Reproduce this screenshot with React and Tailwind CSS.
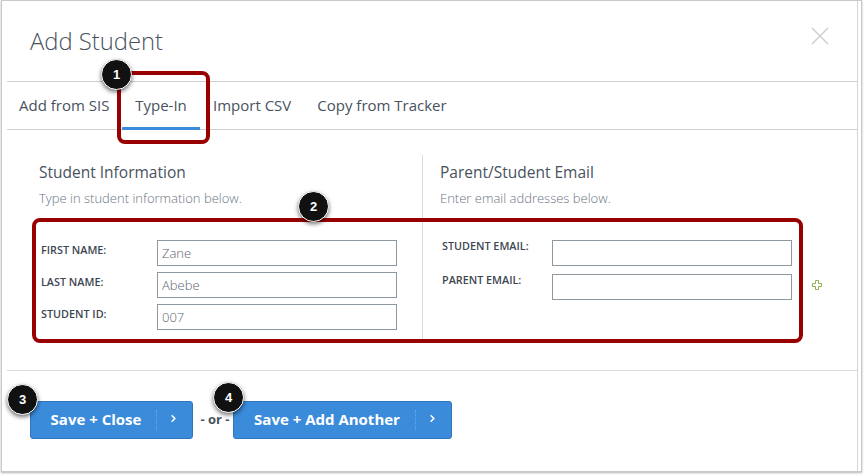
import { ChevronRight } from "lucide-react";

const font = "font-['Open_Sans',sans-serif]";

function Field({ label, value, labelClass = "w-[116px]" }) {
  return (
    <div className="flex items-start">
      <label className={`shrink-0 text-[10.8px] leading-[14px] font-semibold text-[#3d4652] ${labelClass}`}>
        {label}
      </label>
      <div className="w-[240px] h-[26px] border border-[#8f98a1] px-1 text-[13px] leading-[25px] font-light text-[#5a6470]">
        {value}
      </div>
    </div>
  );
}

function SaveButton({ label, className }) {
  return (
    <button className={`flex items-center h-[38px] rounded-[3px] bg-[#3b8bdb] border border-[#2f76bd] text-white ${className}`}>
      <span className="flex-1 text-center text-[15px] font-bold pl-[5px] pb-[1px]">{label}</span>
      <span className="flex items-center justify-center w-[36px] h-[20px] border-l border-dotted border-[#6ea9e4] pr-[2px]">
        <ChevronRight size={11} strokeWidth={3.5} className="-mt-[4px]" />
      </span>
    </button>
  );
}

function Step({ n, className }) {
  return (
    <div className={`absolute w-[31px] h-[31px] rounded-full bg-[#111] border border-white flex items-center justify-center text-white text-[13px] font-bold font-['Liberation_Sans',sans-serif] shadow-[0_2px_4px_rgba(0,0,0,0.55)] ${className}`}>
      {n}
    </div>
  );
}

export default function App() {
  return (
    <div className={`relative w-[864px] h-[475px] overflow-hidden bg-white ${font}`}>
      {/* Modal */}
      <div className="w-[861px] h-[472px] ml-px border border-[#c9c9c9] bg-white pl-[5px] pr-[3px] shadow-[0_1px_2px_rgba(0,0,0,0.3)]">
        <div className="h-full border-r border-[#d4d4d4] flex flex-col">
          {/* Header */}
          <div className="h-[81px] shrink-0 flex items-start justify-between pl-[23px] pr-[28px] pt-[23px] border-b border-[#cfcfcf]">
            <h1 className="text-[23.8px] leading-[34px] font-light text-[#48525e]">Add Student</h1>
            <svg width="18" height="18" viewBox="0 0 18 18" className="mt-[3px]" stroke="#d0d0d0" strokeWidth="1.6" fill="none">
              <path d="M1 1 17 17M17 1 1 17" />
            </svg>
          </div>

          {/* Tabs */}
          <div className="h-[48px] shrink-0 flex items-start border-b border-[#cfcfcf] text-[15px] leading-[46px] text-[#48525e]">
            <span className="ml-[12px] w-[91px]">Add from SIS</span>
            <span className="relative ml-[12px] w-[78px] h-[47px] text-center">
              Type-In
              <span className="absolute left-0 right-0 bottom-[-1px] h-[3px] bg-[#3b8bdb]" />
            </span>
            <span className="ml-[13px]">Import CSV</span>
            <span className="ml-[26px]">Copy from Tracker</span>
          </div>

          {/* Form columns */}
          <div className="h-[241px] shrink-0 border-b border-[#dcdcdc] pt-[25px]">
            <div className="flex h-[188px]">
              <div className="w-[416px] shrink-0 border-r border-[#dcdcdc] pl-[32px] pt-[7px]">
                <h2 className="text-[15.5px] leading-[20px] text-[#48525e]">Student Information</h2>
                <p className="mt-[7px] text-[13px] leading-[18px] font-light text-[#6b747f]">Type in student information below.</p>
                <div className="mt-[33px] flex flex-col gap-[6px] pl-[2px]">
                  <Field label="FIRST NAME:" value="Zane" labelClass="w-[116px] pt-[3px]" />
                  <Field label="LAST NAME:" value="Abebe" labelClass="w-[116px] pt-[3px]" />
                  <Field label="STUDENT ID:" value="007" labelClass="w-[116px] pt-[3px]" />
                </div>
              </div>
              <div className="flex-1 pl-[17px] pt-[7px]">
                <h2 className="text-[15.5px] leading-[20px] text-[#48525e]">Parent/Student Email</h2>
                <p className="mt-[7px] text-[13px] leading-[18px] font-light text-[#6b747f]">Enter email addresses below.</p>
                <div className="mt-[33px] flex items-end pl-[2px]">
                  <div className="flex flex-col gap-[8px]">
                    <Field label="STUDENT EMAIL:" labelClass="w-[110px] -mt-[1px]" />
                    <Field label="PARENT EMAIL:" labelClass="w-[110px] -mt-[1px]" />
                  </div>
                  <svg width="10" height="10" viewBox="0 0 10 10" className="ml-[20px] mb-[10px]" fill="none" stroke="#8fb24f" strokeWidth="1">
                    <path d="M3.5.5h3v3h3v3h-3v3h-3v-3h-3v-3h3z" />
                  </svg>
                </div>
              </div>
            </div>
          </div>

          {/* Footer */}
          <div className="flex items-start pl-[23px] pt-[30px]">
            <SaveButton label="Save + Close" className="w-[163px]" />
            <span className="w-[40px] pl-[4px] text-center text-[13px] leading-[36px] font-bold text-[#48525e] whitespace-nowrap">- or -</span>
            <SaveButton label="Save + Add Another" className="w-[219px]" />
          </div>
        </div>
      </div>

      {/* Annotations */}
      <div className="absolute left-[117px] top-[71px] w-[93px] h-[73px] rounded-[8px] border-[4px] border-[#990000]" />
      <div className="absolute left-[32px] top-[218px] w-[771px] h-[125px] rounded-[8px] border-[4px] border-[#990000]" />
      <Step n="1" className="left-[101px] top-[59px]" />
      <Step n="2" className="left-[298px] top-[191px]" />
      <Step n="3" className="left-[7px] top-[384px]" />
      <Step n="4" className="left-[213px] top-[382px]" />
    </div>
  );
}
